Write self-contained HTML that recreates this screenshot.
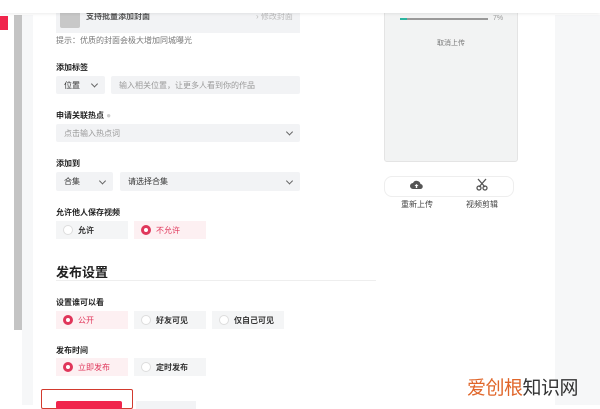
<!DOCTYPE html>
<html><head><meta charset="utf-8"><style>
*{margin:0;padding:0;box-sizing:border-box}
body{width:600px;height:405px;overflow:hidden;background:#fff;font-family:"Liberation Sans","Noto Sans CJK SC",sans-serif;position:relative;color:#222}
.a{position:absolute}
.lbl{position:absolute;left:56px;font-size:8px;font-weight:bold;color:#222}
.box{position:absolute;background:#f2f3f5;border-radius:2px;font-size:8px;color:#999;padding-left:8px;display:flex;align-items:center}
.chev{position:absolute;right:8px;top:50%;width:5px;height:5px;border-right:1px solid #666;border-bottom:1px solid #666;transform:translateY(-70%) rotate(45deg)}
.r{position:absolute;height:18px;width:72px;background:#f4f5f6;font-size:8px;font-weight:bold;color:#333;display:flex;align-items:center;padding-left:22px}
.r::before{content:"";position:absolute;left:7px;top:4px;width:10px;height:10px;border-radius:50%;border:1px solid #ddd;background:#fff;box-sizing:border-box}
.r.on{background:#fdf0f2;color:#e0365a;font-weight:normal}
.r.on::before{border:3px solid #e0365a}
</style></head><body>
<div class="a" style="left:0;top:0;width:600px;height:13px;background:#fff;box-shadow:0 1px 3px rgba(0,0,0,.08);z-index:2"></div>
<div class="a" style="left:0;top:16px;width:8px;height:14px;background:#f0254c"></div>
<div class="a" style="left:14px;top:15px;width:8px;height:315px;background:#c4c4c4"></div>
<div class="a" style="left:22px;top:15px;width:11px;height:390px;background:#f6f7f8"></div>
<div class="a" style="left:555px;top:15px;width:45px;height:390px;background:#f6f7f8"></div>
<div class="a" style="left:56px;top:5px;width:244px;height:28px;background:#f2f3f5"></div>
<div class="a" style="left:60px;top:8px;width:20px;height:20px;background:#c8c8c8;border-radius:2px"></div>
<div class="a" style="left:86px;top:11px;font-size:8px;font-weight:bold;color:#555">支持批量添加封面</div>
<div class="a" style="left:256px;top:11px;font-size:8px;color:#bbb">› 修改封面</div>
<div class="a" style="left:56px;top:35px;font-size:8px;color:#777">提示：优质的封面会极大增加同城曝光</div>
<div class="lbl" style="top:62px">添加标签</div>
<div class="box" style="left:56px;top:76px;width:49px;height:18px;color:#333">位置<span class="chev"></span></div>
<div class="box" style="left:111px;top:76px;width:189px;height:18px">输入相关位置，让更多人看到你的作品</div>
<div class="lbl" style="top:110px">申请关联热点 <span style="color:#ccc">●</span></div>
<div class="box" style="left:56px;top:124px;width:244px;height:18px">点击输入热点词<span class="chev"></span></div>
<div class="lbl" style="top:158px">添加到</div>
<div class="box" style="left:56px;top:172px;width:57px;height:19px;color:#333">合集<span class="chev"></span></div>
<div class="box" style="left:120px;top:172px;width:180px;height:19px;color:#333">请选择合集<span class="chev"></span></div>
<div class="lbl" style="top:207px">允许他人保存视频</div>
<div class="r" style="left:56px;top:221px">允许</div>
<div class="r on" style="left:134px;top:221px">不允许</div>
<div class="a" style="left:56px;top:262px;font-size:13px;font-weight:bold">发布设置</div>
<div class="a" style="left:56px;top:280px;width:320px;height:1px;background:#eee"></div>
<div class="lbl" style="top:297px">设置谁可以看</div>
<div class="r on" style="left:56px;top:311px">公开</div>
<div class="r" style="left:134px;top:311px">好友可见</div>
<div class="r" style="left:212px;top:311px">仅自己可见</div>
<div class="lbl" style="top:345px">发布时间</div>
<div class="r on" style="left:56px;top:358px">立即发布</div>
<div class="r" style="left:134px;top:358px">定时发布</div>
<div class="a" style="left:41px;top:389px;width:92px;height:20px;border:1.5px solid #d23a2e;border-radius:2px"></div>
<div class="a" style="left:56px;top:401px;width:66px;height:8px;background:#f0254c;border-radius:2px"></div>
<div class="a" style="left:136px;top:401px;width:60px;height:8px;background:#f2f3f5"></div>
<div class="a" style="left:384px;top:0;width:134px;height:162px;background:#f2f3f3;border:1px solid #e4e4e4;border-radius:3px"></div>
<div class="a" style="left:400px;top:18px;width:88px;height:2px;background:#999"></div>
<div class="a" style="left:400px;top:18px;width:7px;height:2px;background:#2bb5a0"></div>
<div class="a" style="left:493px;top:15px;font-size:7px;color:#999">7%</div>
<div class="a" style="left:437px;top:38px;font-size:7px;color:#777">取消上传</div>
<div class="a" style="left:384px;top:176px;width:130px;height:21px;border:1px solid #eee;border-radius:8px"></div>
<svg class="a" style="left:410px;top:180px" width="13" height="10" viewBox="0 0 13 10"><path d="M3 9a3 3 0 0 1 0-6 4 4 0 0 1 7.5 1A2.5 2.5 0 0 1 10 9z" fill="#555"/><path d="M6.5 4l-2 2h1.3v2h1.4v-2h1.3z" fill="#fff"/></svg>
<svg class="a" style="left:476px;top:178px" width="12" height="13" viewBox="0 0 12 13"><path d="M2 1l7 8M10 1l-7 8" stroke="#555" stroke-width="1.3"/><circle cx="3" cy="10" r="2" fill="none" stroke="#555" stroke-width="1.3"/><circle cx="9" cy="10" r="2" fill="none" stroke="#555" stroke-width="1.3"/></svg>
<div class="a" style="left:401px;top:199px;font-size:8px;color:#444">重新上传</div>
<div class="a" style="left:466px;top:199px;font-size:8px;color:#444">视频剪辑</div>
<div class="a" style="left:467px;top:373px;font-size:19px;color:#333;letter-spacing:-0.5px"><span style="color:#e0662a">爱创根</span>知识网</div>
</body></html>
